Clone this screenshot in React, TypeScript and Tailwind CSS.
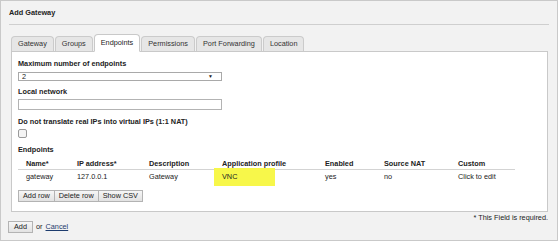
import React from "react";

const tabs = ["Gateway", "Groups", "Endpoints", "Permissions", "Port Forwarding", "Location"];

const cols = [
  "Name*",
  "IP address*",
  "Description",
  "Application profile",
  "Enabled",
  "Source NAT",
  "Custom",
];

const row = ["gateway", "127.0.0.1", "Gateway", "VNC", "yes", "no", "Click to edit"];

export default function App() {
  return (
    <div className="w-[558px] h-[241px] bg-[#f2f2f2] border border-[#c9c9c9] font-['Liberation_Sans',Arial,sans-serif] text-[7.3px] text-[#222] overflow-hidden">
      {/* header */}
      <div className="mx-[8px] pt-[7px] pb-[6px] border-b border-[#cfcfcf]">
        <div className="font-bold leading-[10px]">Add Gateway</div>
      </div>

      {/* tabs */}
      <div className="flex items-end gap-[1px] ml-[10px] mt-[9px] relative z-10">
        {tabs.map((t) =>
          t === "Endpoints" ? (
            <div
              key={t}
              className="h-[18px] px-[6px] -mb-px flex items-center pt-[1px] bg-white border border-[#c9c9c9] border-b-white rounded-t-[4px] text-[#222]"
            >
              {t}
            </div>
          ) : (
            <div
              key={t}
              className="h-[15px] px-[6px] flex items-center bg-[#e6e6e6] border border-b-0 border-[#cbcbcb] rounded-t-[4px] text-[#333]"
            >
              {t}
            </div>
          )
        )}
      </div>

      {/* panel */}
      <div className="ml-[10px] mr-[9px] bg-white border border-[#c9c9c9] px-[6px] pt-[7px] pb-[9px]">
        <div className="font-bold leading-[10px]">Maximum number of endpoints</div>
        <div className="mt-[3px] w-[204px] h-[9px] border border-[#a9a9a9] flex items-center justify-between pl-[3px] pr-[8px]">
          <span className="leading-[7px]">2</span>
          <span className="text-[5px] leading-[5px]">▼</span>
        </div>

        <div className="font-bold leading-[10px] mt-[6px]">Local network</div>
        <div className="mt-[2px] w-[204px] h-[11px] border border-[#b3b3b3]" />

        <div className="font-bold leading-[10px] mt-[7px]">
          Do not translate real IPs into virtual IPs (1:1 NAT)
        </div>
        <div className="mt-[2px] w-[9px] h-[9px] border border-[#9a9a9a] rounded-[2px] bg-[#f4f4f4]" />

        <div className="font-bold leading-[10px] mt-[7px]">Endpoints</div>

        <div className="mt-[3px] w-[497px]">
          <div className="grid grid-cols-[51px_72px_73px_103px_59px_74px_65px] border-b border-[#d3d3d3] h-[12px] items-center">
            {cols.map((c) => (
              <div key={c} className="pl-[8px] font-bold leading-[10px] whitespace-nowrap">
                {c}
              </div>
            ))}
          </div>
          <div className="grid grid-cols-[51px_72px_73px_103px_59px_74px_65px] h-[13px] items-center">
            {row.map((c, i) => (
              <div key={i} className="pl-[8px] leading-[10px] whitespace-nowrap relative">
                {i === 3 && (
                  <div className="absolute left-0 top-[-4px] w-[61px] h-[18px] bg-[#f7f74a]" />
                )}
                <span className="relative">{c}</span>
              </div>
            ))}
          </div>
        </div>

        <div className="mt-[7px] flex">
          {["Add row", "Delete row", "Show CSV"].map((b, i) => (
            <div
              key={b}
              className={`h-[12px] px-[4px] flex items-center border border-[#b3b3b3] bg-gradient-to-b from-[#f6f6f6] to-[#e2e2e2] text-[#222] ${
                i > 0 ? "-ml-px" : ""
              }`}
            >
              {b}
            </div>
          ))}
        </div>
      </div>

      {/* footer */}
      <div className="text-right mr-[9px] mt-[2px] leading-[8px]">* This Field is required.</div>
      <div className="ml-[7px] -mt-[1px] flex items-center gap-[3px]">
        <div className="h-[12px] w-[25px] flex items-center justify-center border border-[#b3b3b3] bg-gradient-to-b from-[#f6f6f6] to-[#e2e2e2]">
          Add
        </div>
        <span>or</span>
        <span className="underline text-[#1d3c6e]">Cancel</span>
      </div>
    </div>
  );
}
